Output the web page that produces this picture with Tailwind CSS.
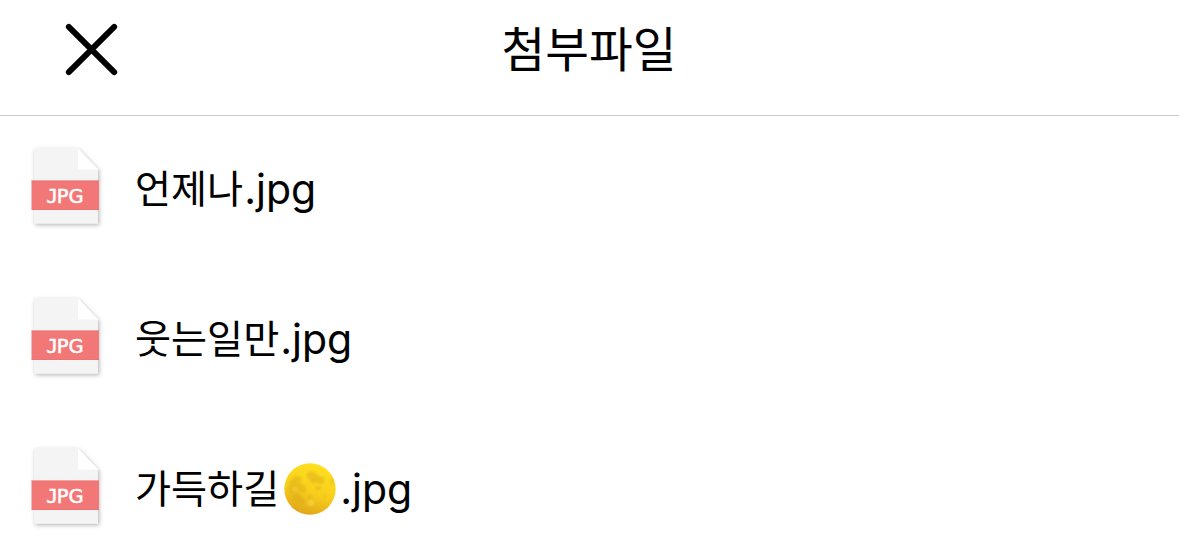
<!DOCTYPE html>
<html lang="ko">
<head>
  <meta charset="UTF-8" />
  <meta name="viewport" content="width=device-width, initial-scale=1" />
  <title>첨부파일</title>
  <script src="https://cdn.jsdelivr.net/npm/@tailwindcss/browser@4"></script>
</head>
<body class="bg-white text-black h-screen overflow-hidden font-['Inter','Noto_Sans_CJK_KR',sans-serif]">
  <!-- shared icons -->
  <svg class="absolute size-0">
    <defs>
      <linearGradient id="moonFill" x1="0.65" y1="0" x2="0.35" y2="1">
        <stop offset="0" stop-color="#ffe01f" />
        <stop offset="0.55" stop-color="#f8cf1c" />
        <stop offset="1" stop-color="#dea51b" />
      </linearGradient>
      <filter id="soft"><feGaussianBlur stdDeviation="0.9" /></filter>
      <filter id="fileShadow" x="-20%" y="-20%" width="140%" height="140%">
        <feDropShadow dx="1.2" dy="1.5" stdDeviation="2" flood-color="#000" flood-opacity="0.3" />
      </filter>
    </defs>
    <symbol id="fileJpg" viewBox="0 0 80 90">
      <path d="M9 8.5h44l20 21v54H9z" fill="#f4f4f4" filter="url(#fileShadow)" />
      <path d="M53 8.5l20 21H53z" fill="#fff" />
      <path d="M6.5 40.5h67.5v29.5h-67.5z" fill="#f27878" />
      <path d="M6.5 41h67.5M6.5 69.5h67.5" stroke="#e56e6e" />
    </symbol>
  </svg>

  <header class="h-[116px] border-b border-[#c8c8c8] grid grid-cols-[1fr_auto_1fr] items-start">
    <button class="ml-[65px] mt-[23px] w-[53px] h-[53px]" aria-label="닫기">
      <svg viewBox="0 0 53 53" class="size-[53px]" fill="none" stroke="#000" stroke-width="5.9" stroke-linecap="round">
        <path d="M3.8 3.8l45.4 45.4M49.2 3.8L3.8 49.2" />
      </svg>
    </button>
    <h1 class="mt-[18px] mr-px text-[47.5px] leading-[64px]">첨부파일</h1>
  </header>

  <ul>
    <li class="h-[150px] pl-[25px] pt-6 flex items-start">
      <svg viewBox="0 0 80 90" class="w-20 h-[90px] shrink-0 fill-white stroke-white stroke-[0.5] text-[19.5px] font-['DejaVu_Sans',sans-serif]">
        <use href="#fileJpg" stroke="none" />
        <text x="21.2" y="62.7" font-family="DejaVu Sans Mono">J</text>
        <text x="31.8" y="62.7">PG</text>
      </svg>
      <p class="ml-[30px] mt-[19px] flex items-center text-[39.2px] leading-[60px]">
        <span>언제나</span><span class="ml-px -mt-px text-[41px]">.jpg</span>
      </p>
    </li>
    <li class="h-[150px] pl-[25px] pt-6 flex items-start">
      <svg viewBox="0 0 80 90" class="w-20 h-[90px] shrink-0 fill-white stroke-white stroke-[0.5] text-[19.5px] font-['DejaVu_Sans',sans-serif]">
        <use href="#fileJpg" stroke="none" />
        <text x="21.2" y="62.7" font-family="DejaVu Sans Mono">J</text>
        <text x="31.8" y="62.7">PG</text>
      </svg>
      <p class="ml-[30px] mt-[19px] flex items-center text-[39.2px] leading-[60px]">
        <span>웃는일만</span><span class="ml-px -mt-px text-[41px]">.jpg</span>
      </p>
    </li>
    <li class="h-[150px] pl-[25px] pt-6 flex items-start">
      <svg viewBox="0 0 80 90" class="w-20 h-[90px] shrink-0 fill-white stroke-white stroke-[0.5] text-[19.5px] font-['DejaVu_Sans',sans-serif]">
        <use href="#fileJpg" stroke="none" />
        <text x="21.2" y="62.7" font-family="DejaVu Sans Mono">J</text>
        <text x="31.8" y="62.7">PG</text>
      </svg>
      <p class="ml-[30px] mt-[19px] flex items-center text-[39.2px] leading-[60px]">
        <span>가득하길</span>
        <svg viewBox="0 0 52 52" class="size-[52px] ml-[5px] mr-[4px]" role="img" aria-label="보름달">
          <circle cx="26" cy="26" r="25.7" fill="url(#moonFill)" />
          <g fill="#d7a51c" filter="url(#soft)" opacity="0.42">
            <path d="M24 9c4-2 8 0 9 3l6 2c3 3 1 7-2 7l-5-1c-3 1-6 0-6-3-3-2-5-5-2-8z" />
            <path d="M9 15c3-3 7-2 9 0l-2 5c4 1 8 4 6 8-3 3-6 1-8-1l-7 4c-4-3-4-11 2-16z" />
            <path d="M8 31l6-2c4 2 3 6 7 8 1 4-4 5-7 3-4-1-7-5-6-9z" />
            <ellipse cx="34" cy="25" rx="3" ry="2" />
            <ellipse cx="48" cy="18" rx="1.5" ry="3" />
            <circle cx="41" cy="33" r="1.5" />
            <circle cx="26" cy="34" r="2" />
          </g>
          <g fill="#ffe45a" filter="url(#soft)" opacity="0.45">
            <circle cx="27" cy="40" r="3" />
            <circle cx="11" cy="26" r="2" />
            <circle cx="37" cy="11" r="1.5" />
          </g>
        </svg>
        <span class="-mt-px text-[41px]">.jpg</span>
      </p>
    </li>
  </ul>
</body>
</html>
